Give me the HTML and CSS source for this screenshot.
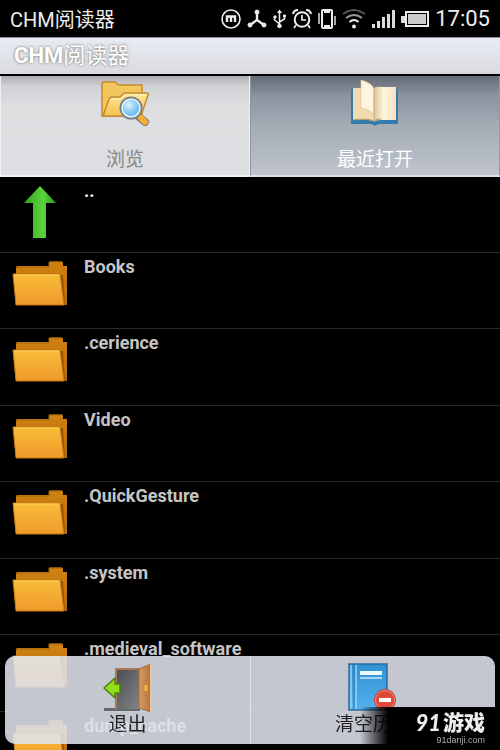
FILE: index.html
```html
<!DOCTYPE html>
<html lang="zh-CN">
<head>
<meta charset="utf-8">
<meta name="viewport" content="width=device-width, initial-scale=1">
<title>CHM阅读器</title>
<link rel="stylesheet" href="styles.css">
</head>
<body>
<svg class="defs" width="0" height="0" aria-hidden="true">
  <defs>
    <linearGradient id="front" x1="0" y1="0" x2="0" y2="1"><stop offset="0" stop-color="#f8bd38"/><stop offset="1" stop-color="#f0992b"/></linearGradient>
    <linearGradient id="back" x1="0" y1="0" x2="0" y2="1"><stop offset="0" stop-color="#d08312"/><stop offset="1" stop-color="#b56c0c"/></linearGradient>
    <symbol id="folder" viewBox="0 0 56 46">
      <path d="M4 7l1-2h32V1.500l1-1h12l1 1V5h4v39H4z" fill="url(#back)"/>
      <path d="M4 6h33V1h13" fill="none" stroke="#a5660a"/>
      <path d="M48 14l3 30h2L51 14z" fill="#935607"/>
      <path d="M1 13h47l4 31H4z" fill="url(#front)" stroke="#c67b12"/>
      <path d="M2 14h45" stroke="#ffd15a"/>
    </symbol>
  </defs>
</svg>
<div class="screen">
  <header class="status">
    <span class="status-title">CHM阅读器</span>
    <div class="status-icons">
      <svg width="20" height="20" viewBox="0 0 20 20" fill="none" stroke="#eee"><circle cx="10" cy="10" r="9" stroke-width="1.600"/><path d="M6 13V7.500h8V13M10 7.500V13" stroke-width="2.400"/></svg>
      <svg width="20" height="20" viewBox="0 0 20 20" fill="#eee" stroke="#eee"><circle cx="10" cy="3" r="2"/><circle cx="3" cy="16" r="2"/><circle cx="17" cy="16" r="2"/><path d="M10 3v8L3 16M10 11l7 5" fill="none" stroke-width="2.400"/></svg>
      <svg width="13" height="20" viewBox="0 0 13 20" fill="#eee" stroke="#eee"><path d="M6.500 3v14M1.500 8v3l5 4M11.500 7v3l-5 3" fill="none" stroke-width="1.500"/><path d="M4 4L6.500 .5 9 4z" stroke="none"/><circle cx="6.500" cy="17" r="1.800"/><circle cx="2" cy="8" r="1.200"/><path d="M10.500 6h2v2h-2z"/></svg>
      <svg width="20" height="20" viewBox="0 0 20 20" fill="none" stroke="#eee"><circle cx="10" cy="10.500" r="7.300" stroke-width="2"/><path d="M10 6v5h4M4 16l-2 3M16 16l2 3" stroke-width="1.700"/><path d="M1 5q1-4 5-4M14 1q4 0 5 4" stroke-width="2.200"/></svg>
      <svg width="18" height="20" viewBox="1 0 18 20" fill="none" stroke="#eee"><rect x="5" y="1" width="10" height="18" rx="1" stroke-width="2"/><path d="M7 3h6M7 17h6" stroke-width="2"/><path d="M2 4v11M18 7v9" stroke-width="1.400"/></svg>
      <svg width="24" height="20" viewBox="0 0 24 20" fill="none" stroke-width="2"><path d="M1 5q11-8 22 0" stroke="#555"/><path d="M4 9q8-6 16 0" stroke="#999"/><path d="M7.500 13q4.500-4 9 0" stroke="#eee"/><circle cx="12" cy="17.500" r="2" fill="#eee"/></svg>
      <svg width="23" height="20" viewBox="0 0 23 20" fill="#ddd"><path d="M0 15h3v4H0zM5 12h3v7H5zM10 8h3v11h-3zM15 5h3v14h-3zM20 1h3v18h-3z"/></svg>
      <svg width="28" height="20" viewBox="0 0 28 20"><path d="M0 7h4v7H0z" fill="#ddd"/><rect x="5" y="3" width="22" height="14" fill="none" stroke="#eee" stroke-width="2"/><rect x="7" y="5" width="18" height="10" fill="#ccc"/></svg>
      <time class="clock">17:05</time>
    </div>
  </header>
  <h1 class="title">CHM<span>阅读器</span></h1>
  <nav class="tabs">
    <button class="tab" type="button">
      <svg width="50" height="46" viewBox="0 0 50 46">
        <defs>
          <linearGradient id="yel" x1="0" y1="0" x2="0" y2="1"><stop offset="0" stop-color="#ffe596"/><stop offset="1" stop-color="#f4c34e"/></linearGradient>
          <radialGradient id="lens" cx=".4" cy=".35"><stop offset="0" stop-color="#d9f4ff"/><stop offset="1" stop-color="#70bcf0"/></radialGradient>
        </defs>
        <path d="M2 36V4q0-2 2-2h11l3 3h24v31z" fill="#f2c75d" stroke="#c58b2e" stroke-width="1.500"/>
        <path d="M3 36l6-17q1-2 3-2h8l4-4h23q2 0 1 2l-7 21z" fill="url(#yel)" stroke="#c58b2e" stroke-width="1.500"/>
        <path d="M11 19h10l4-4h22" stroke="#fff4c1" fill="none"/>
        <path d="M39 37l6 5" stroke="#8c7d6a" stroke-width="8" stroke-linecap="round"/>
        <path d="M41 38l4 4" stroke="#f6ad38" stroke-width="6" stroke-linecap="round"/>
        <circle cx="31" cy="28" r="10" fill="url(#lens)" stroke="#72808d" stroke-width="3"/>
        <circle cx="31" cy="28" r="9" fill="none" stroke="#e9f4fb" stroke-width="1.500"/>
      </svg>
      <span>浏览</span>
    </button>
    <button class="tab active" type="button">
      <svg width="50" height="46" viewBox="0 0 50 46">
        <defs><linearGradient id="page"><stop offset="0" stop-color="#dec49b"/><stop offset=".45" stop-color="#fff5df"/><stop offset="1" stop-color="#f3e1bd"/></linearGradient></defs>
        <path d="M1 9h47v35H28q-3 3-6 0H1z" fill="#337baa"/>
        <path d="M3 8h21v33q-8-2-21-1z" fill="#f1dab2"/>
        <path d="M24 8q3-2 8-1h14v33H31q-5 0-7 2z" fill="url(#page)"/>
        <path d="M31 39q-5 0-7 2-7-3-21-1" stroke="#b29570" fill="none"/>
        <path d="M11 0q11 3 13 9v26q-3-5-13-7z" fill="#fff4df" stroke="#dfc69d" stroke-width=".7"/>
        <path d="M24 9v33" stroke="#c8aa7b"/>
      </svg>
      <span>最近打开</span>
    </button>
  </nav>
  <main>
    <ul class="files">
      <li><a href="#"><svg class="icon" width="56" height="54" viewBox="0 0 56 54"><defs><linearGradient id="green"><stop offset="0" stop-color="#36a320"/><stop offset=".6" stop-color="#5bd43c"/><stop offset="1" stop-color="#299518"/></linearGradient></defs><path d="M28 1l16 17H34v35H21V18H12z" fill="url(#green)"/></svg><span class="up">..</span></a></li>
      <li><a href="#"><svg class="icon" width="56" height="46"><use href="#folder"/></svg><span>Books</span></a></li>
      <li><a href="#"><svg class="icon" width="56" height="46"><use href="#folder"/></svg><span>.cerience</span></a></li>
      <li><a href="#"><svg class="icon" width="56" height="46"><use href="#folder"/></svg><span>Video</span></a></li>
      <li><a href="#"><svg class="icon" width="56" height="46"><use href="#folder"/></svg><span>.QuickGesture</span></a></li>
      <li><a href="#"><svg class="icon" width="56" height="46"><use href="#folder"/></svg><span>.system</span></a></li>
      <li><a href="#"><svg class="icon" width="56" height="46"><use href="#folder"/></svg><span>.medieval_software</span></a></li>
      <li><a href="#"><svg class="icon" width="56" height="46"><use href="#folder"/></svg><span>dump_cache</span></a></li>
    </ul>
  </main>
  <div class="menu">
    <button type="button">
      <svg width="50" height="50" viewBox="0 0 50 50">
        <defs>
          <linearGradient id="dark" x1="0" y1="0" x2="1" y2="1"><stop offset="0" stop-color="#4c4d50"/><stop offset="1" stop-color="#85868a"/></linearGradient>
          <linearGradient id="wood"><stop offset="0" stop-color="#d69b61"/><stop offset="1" stop-color="#b6713e"/></linearGradient>
        </defs>
        <path d="M1 45h36v3H1z" fill="#66686b"/>
        <path d="M13 46V6h25v40" fill="url(#dark)" stroke="#a97b55" stroke-width="2"/>
        <path d="M36 6l12-5v48l-12-4z" fill="url(#wood)" stroke="#a56b3e"/>
        <path d="M48 1v48" stroke="#e5c49e" stroke-width="2"/>
        <path d="M43 22v6" stroke="#f4bd27" stroke-width="3"/>
        <path d="M1 25l11-10v6h5v9h-5v5z" fill="#93dc19" stroke="#48830e" stroke-width="1.500" stroke-linejoin="round"/>
      </svg>
      <span>退出</span>
    </button>
    <button type="button">
      <svg width="50" height="50" viewBox="0 0 50 50">
        <defs><linearGradient id="blue" x1="0" y1="0" x2="0" y2="1"><stop offset="0" stop-color="#3090d0"/><stop offset="1" stop-color="#55b0ee"/></linearGradient></defs>
        <path d="M1 1h38v46H1z" fill="url(#blue)" stroke="#286da1" stroke-width="1.500"/>
        <path d="M3 2v44M8 2v44" stroke="#94d3f8" stroke-width="1.500"/><path d="M6 2v44" stroke="#2678b4"/>
        <path d="M12 10h22" stroke="#eef9ff" stroke-width="4"/><path d="M12 15h22" stroke="#c9eafb" stroke-width="1.500"/>
        <circle cx="37" cy="37" r="10.500" fill="#df4938" stroke="#c53b30"/><circle cx="37" cy="37" r="9.500" fill="none" stroke="#f28a78"/>
        <path d="M31 37h12" stroke="#fff" stroke-width="4"/>
      </svg>
      <span>清空历史</span>
    </button>
  </div>
  <aside class="mark">
    <div class="brand"><b>91</b><strong>游戏</strong></div>
    <small>91danji.com</small>
  </aside>
</div>
</body>
</html>
```
FILE: styles.css
```css
* { box-sizing: border-box; }

body {
  margin: 0;
  background: #000;
  color: #fff;
  font-family: Roboto, "Noto Sans CJK SC", sans-serif;
}

button {
  margin: 0;
  padding: 0;
  border: 0;
  background: none;
  color: inherit;
  font: inherit;
}

svg { display: block; flex: none; }

.defs { position: absolute; }

.screen {
  display: flex;
  flex-direction: column;
  height: 100vh;
  overflow: hidden;
}

.status {
  flex: none;
  display: flex;
  align-items: center;
  justify-content: space-between;
  height: 38px;
  padding: 0 10px;
  border-bottom: 1px solid #8d9094;
  color: #eee;
}

.status-title { font-size: 20px; }

.status-icons {
  display: flex;
  align-items: center;
  gap: 6px;
}

.clock { font-size: 22px; }

.title {
  flex: none;
  height: 36px;
  margin: 0 0 2px;
  padding: 0 14px;
  background: linear-gradient(#e9ecf2, #d9dbe1);
  font-size: 22px;
  font-weight: 700;
  line-height: 36px;
  text-shadow: 0 0 3px #666;
}

.title span { font-weight: 400; }

.tabs {
  flex: none;
  display: grid;
  grid-template-columns: 1fr 1fr;
  height: 101px;
}

.tab {
  display: flex;
  flex-direction: column;
  align-items: center;
  justify-content: space-between;
  padding: 4px 0 2px;
  border: solid #f0f1f3;
  border-width: 0 1px 2px;
  background: linear-gradient(#adaeb2, #d0d1d4 10px, #dddee0 30px, #dedfe2);
  color: #888;
  font-size: 19px;
  line-height: 26px;
}

.tab.active {
  border-color: #dde1e7;
  border-left-color: #8d949d;
  border-right-color: #9299a3;
  background: linear-gradient(#646b75, #8b949f 20px, #a4acb6 50px, #bfc4cd);
  color: #fff;
}

.files {
  display: grid;
  grid-template-rows: 76px;
  grid-auto-rows: 76px 77px;
  margin: 0;
  padding: 0;
  list-style: none;
}

.files li { border-bottom: 1px solid #292929; }

.files a {
  display: flex;
  align-items: flex-start;
  gap: 16px;
  height: 100%;
  padding: 4px 12px;
  color: #c5c5c5;
  font-size: 18px;
  font-weight: 700;
  line-height: 20px;
  text-decoration: none;
}

.icon { margin-top: 4px; }

.files .up { color: #fff; }

.menu {
  position: fixed;
  right: 5px;
  bottom: 6px;
  left: 5px;
  display: grid;
  grid-template-columns: 1fr 1fr;
  height: 88px;
  border-radius: 10px;
  background: rgba(223, 226, 236, 0.88);
  color: #222;
}

.menu button {
  display: flex;
  flex-direction: column;
  align-items: center;
  justify-content: space-between;
  padding: 7px 0;
  font-size: 19px;
  line-height: 24px;
}

.menu button + button { border-left: 1px solid #dfe1e6; }

.mark {
  position: fixed;
  right: 0;
  bottom: 0;
  display: flex;
  flex-direction: column;
  align-items: flex-end;
  width: 140px;
  height: 43px;
  padding: 4px 15px 0 0;
  background: linear-gradient(90deg, transparent, #000 28px);
}

.brand {
  display: flex;
  align-items: center;
  gap: 2px;
  color: #eee;
  line-height: 24px;
}

.brand b {
  font-family: Lato, sans-serif;
  font-size: 22px;
  font-style: italic;
  font-weight: 900;
}

.brand strong {
  font-size: 21px;
  font-weight: 900;
}

.mark small {
  color: #aaa;
  font-family: "Liberation Sans", sans-serif;
  font-size: 9px;
  line-height: 10px;
}
```
